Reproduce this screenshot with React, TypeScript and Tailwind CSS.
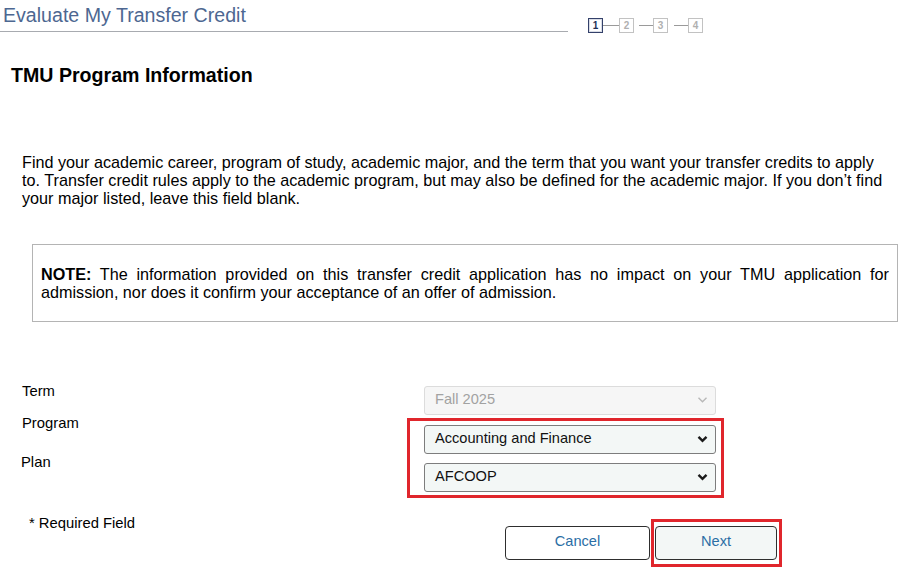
import React from "react";

const font = { fontFamily: '"Liberation Sans", Arial, sans-serif' };

function Chevron({ disabled }: { disabled?: boolean }) {
  return (
    <svg width="11" height="8" viewBox="0 0 11 8" className="shrink-0">
      <path
        d="M1.5 1.8 L5.5 5.8 L9.5 1.8"
        fill="none"
        stroke={disabled ? "#b8b8b8" : "#1a1a1a"}
        strokeWidth={disabled ? 1.4 : 2.4}
      />
    </svg>
  );
}

function StepBox({ n, active }: { n: number; active?: boolean }) {
  return (
    <div
      className={`flex h-[15px] w-[15px] items-center justify-center border text-[10px] leading-none font-bold ${
        active
          ? "border-[#34416a] bg-white text-[#233055] shadow-[inset_0_0_0_1px_#d8dce6]"
          : "border-[#c2c2c2] bg-white text-[#b0b0b0]"
      }`}
    >
      {n}
    </div>
  );
}

function Steps() {
  return (
    <div className="mt-[18px] flex items-center">
      <StepBox n={1} active />
      <div className="h-px w-[16px] bg-[#9a9a9a]" />
      <StepBox n={2} />
      <div className="ml-[5px] h-px w-[14px] bg-[#9a9a9a]" />
      <StepBox n={3} />
      <div className="ml-[6px] h-px w-[14px] bg-[#9a9a9a]" />
      <StepBox n={4} />
    </div>
  );
}

function SelectBox({ value, disabled }: { value: string; disabled?: boolean }) {
  return (
    <div
      className={`flex h-[29px] w-[292px] items-center justify-between rounded-[3px] border pb-px pl-[10px] pr-[7px] text-[14.6px] ${
        disabled
          ? "border-[#dcdcdc] bg-[#f6f6f6] text-[#a2a2a2]"
          : "border-[#7d7d7d] bg-[#f3f7f6] text-[#111]"
      }`}
    >
      <span>{value}</span>
      <Chevron disabled={disabled} />
    </div>
  );
}

export default function App() {
  return (
    <div className="h-[575px] w-[901px] overflow-hidden bg-white text-black" style={font}>
      {/* Header */}
      <div className="flex">
        <div className="h-[32px] w-[568px] border-b border-[#a8abb0] pl-[3px] pt-[4px] text-[19.6px] leading-[23px] text-[#4d6791]">
          Evaluate My Transfer Credit
        </div>
        <div className="ml-[20px]">
          <Steps />
        </div>
      </div>

      <h2 className="ml-[11px] mt-[31px] text-[19.6px] leading-[23px] font-bold">TMU Program Information</h2>

      <p className="ml-[22px] mt-[66px] w-[866px] text-[16.2px] leading-[18px]">
        Find your academic career, program of study, academic major, and the term that you want your transfer credits to
        apply to. Transfer credit rules apply to the academic program, but may also be defined for the academic major. If
        you don’t find your major listed, leave this field blank.
      </p>

      {/* Note box */}
      <div className="ml-[32px] mt-[37px] flex h-[78px] w-[866px] items-center border border-[#b4b4b4] px-[8px]">
        <p className="text-justify text-[16.2px] leading-[18px]">
          <b>NOTE:</b> The information provided on this transfer credit application has no impact on your TMU
          application for admission, nor does it confirm your acceptance of an offer of admission.
        </p>
      </div>

      {/* Form */}
      <div className="mt-[60px] flex">
        <div className="w-[407px] pl-[22px] text-[14.8px] leading-[18px]">
          <div>Term</div>
          <div className="mt-[14px]">Program</div>
          <div className="-ml-px mt-[21px]">Plan</div>
          <div className="ml-[7px] mt-[43px]">* Required Field</div>
        </div>
        <div>
          <div className="ml-[17px] mt-[4px]">
            <SelectBox value="Fall 2025" disabled />
          </div>
          <div className="mt-[3px] flex w-[317px] flex-col gap-[9px] border-[3px] border-[#e0262c] pb-[3px] pl-[14px] pt-[4px]">
            <SelectBox value="Accounting and Finance" />
            <SelectBox value="AFCOOP" />
          </div>
          <div className="mt-[21px] flex items-start">
            <button className="ml-[98px] mt-[7px] h-[34px] w-[145px] rounded-[4px] border border-[#2e2e2e] bg-white pb-[2px] text-[14.6px] text-[#2b6ea5]">
              Cancel
            </button>
            <div className="ml-px border-[3px] border-[#e0262c] pb-[4px] pl-px pr-[2px] pt-[4px]">
              <button className="block h-[34px] w-[122px] rounded-[4px] border border-[#2e2e2e] bg-[#f3f7f6] pb-[2px] text-[14.6px] text-[#2b6ea5]">
                Next
              </button>
            </div>
          </div>
        </div>
      </div>
    </div>
  );
}
